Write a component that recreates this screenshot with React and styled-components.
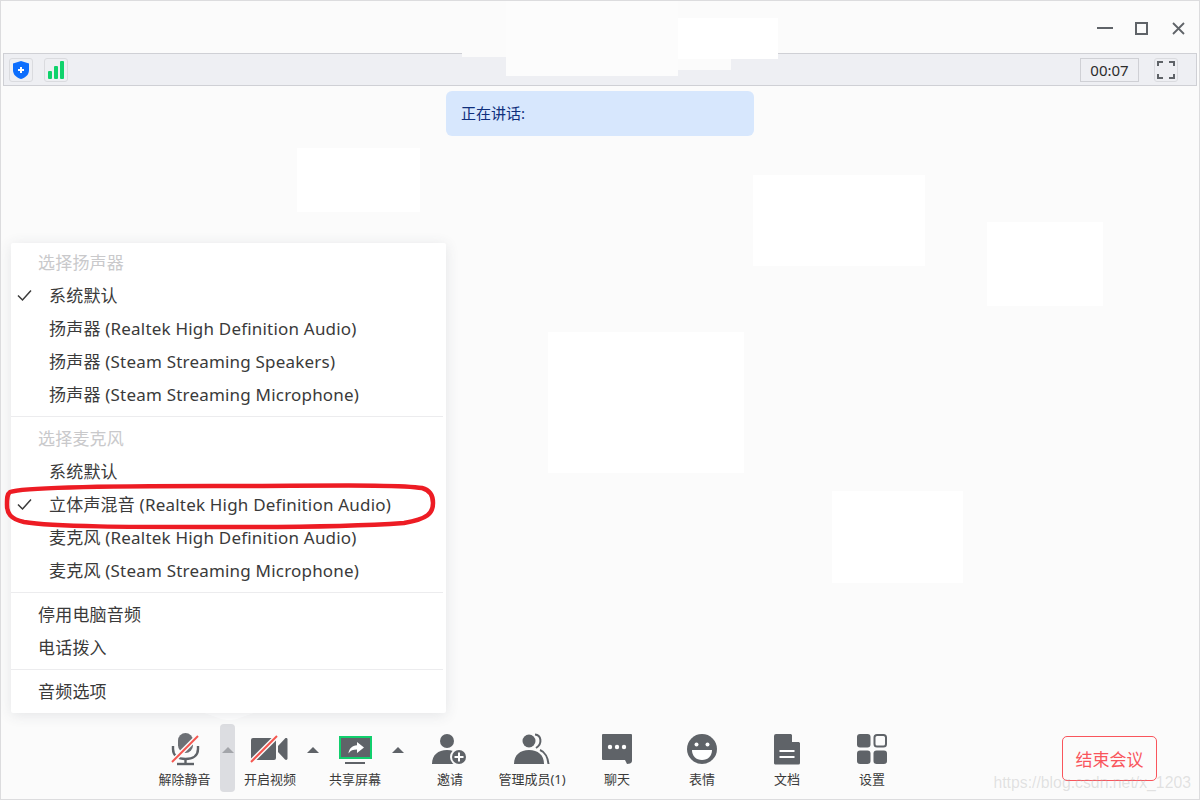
import styled, { createGlobalStyle } from 'styled-components';

const GREY = '#5f6368';
const UI_FONT = '"Noto Sans", "Noto Sans CJK SC", sans-serif';

const GlobalStyle = createGlobalStyle`
  html, body {
    margin: 0;
    padding: 0;
    width: 1200px;
    height: 800px;
    overflow: hidden;
    background: #fff;
  }
  * {
    box-sizing: border-box;
  }
`;

const Window = styled.div`
  position: relative;
  width: 1200px;
  height: 800px;
  display: flex;
  flex-direction: column;
  background: #fbfbfb;
  border: 1px solid #dcdcde;
  font-family: ${UI_FONT};
  color: #3a3a3a;
  overflow: hidden;
`;

const TitleBar = styled.div`
  height: 52px;
  flex: none;
  display: flex;
  justify-content: flex-end;
  align-items: center;
  padding: 2px 2px 0 0;
`;

const WinButton = styled.div`
  width: 37px;
  height: 30px;
  display: flex;
  align-items: center;
  justify-content: center;
`;

const InfoBar = styled.div`
  height: 33px;
  flex: none;
  margin: 0 2px;
  display: flex;
  align-items: center;
  gap: 11px;
  padding: 0 18px 0 5px;
  background: #eeeff3;
  border: 1px solid #cfd0d5;
`;

const InfoIcon = styled.div`
  width: 24px;
  height: 24px;
  display: flex;
  align-items: center;
  justify-content: center;
  border: 1px solid #dadbdf;
  border-radius: 3px;
`;

const Timer = styled.div`
  margin: 0 4px 0 auto;
  width: 59px;
  height: 24px;
  display: flex;
  align-items: center;
  justify-content: center;
  border: 1px solid #cfd0d5;
  font-size: 15px;
  color: #2c2c2c;
`;

const Stage = styled.div`
  flex: 1;
  display: flex;
  justify-content: center;
  align-items: flex-start;
  padding-top: 5px;
`;

const SpeakerPill = styled.div`
  width: 308px;
  height: 45px;
  display: flex;
  align-items: center;
  padding: 0 0 3px 15px;
  background: #d7e7fd;
  border-radius: 6px;
  font-size: 15px;
  color: #0f2f7c;
`;

/* painted-over patches in the screenshot */
const Patch = styled.div`
  position: absolute;
  left: ${(p) => p.$x - 1}px;
  top: ${(p) => p.$y - 1}px;
  width: ${(p) => p.$w}px;
  height: ${(p) => p.$h}px;
  background: ${(p) => p.$bg || '#fff'};
`;

const Menu = styled.div`
  position: absolute;
  left: 10px;
  top: 242px;
  width: 435px;
  height: 470px;
  padding: 4px 3px 0 0;
  background: #fff;
  border-radius: 2px;
  box-shadow: 0 2px 14px rgba(60, 64, 80, 0.12);
  font-size: 17px;
  letter-spacing: 0.2px;
`;

const MenuTip = styled.svg`
  position: absolute;
  left: 203px;
  top: 712px;
`;

const Row = styled.div`
  height: 33px;
  display: flex;
  align-items: center;
  padding: 0 0 4px ${(p) => (p.$flat ? 27 : 6)}px;
  color: ${(p) => (p.$muted ? '#c9c9cb' : '#3a3a3a')};
  white-space: nowrap;
`;

const CheckSlot = styled.span`
  width: 32px;
  flex: none;
  display: flex;
  align-items: center;
  padding-top: 2px;
`;

const Divider = styled.div`
  height: 1px;
  margin: 4px 0 6px;
  background: #ececee;
`;

const Highlight = styled.svg`
  position: absolute;
  left: 3px;
  top: 482px;
  pointer-events: none;
`;

const Toolbar = styled.div`
  height: 75px;
  flex: none;
  display: flex;
  align-items: flex-start;
  padding-left: 148px;
`;

const Tool = styled.div`
  width: ${(p) => p.$w}px;
  flex: none;
  display: flex;
  flex-direction: column;
  align-items: center;
  padding-top: 8px;
  font-size: 13px;
  color: #3a3a3a;
`;

const ToolIcon = styled.svg`
  display: block;
  width: 44px;
  height: 34px;
`;

const ToolLabel = styled.div`
  margin-top: 5px;
  line-height: 16px;
  white-space: nowrap;
`;

const Caret = styled.div`
  width: 15px;
  height: 68px;
  flex: none;
  display: flex;
  justify-content: center;
  padding-top: 23px;
  border-radius: 4px;
  background: ${(p) => (p.$active ? '#dcdde1' : 'transparent')};
  &::before {
    content: '';
    width: 0;
    height: 0;
    border-left: 6px solid transparent;
    border-right: 6px solid transparent;
    border-bottom: 6px solid ${(p) => (p.$active ? '#a3a5aa' : GREY)};
  }
`;

const EndButton = styled.div`
  margin: 12px 42px 0 auto;
  width: 95px;
  height: 45px;
  display: flex;
  align-items: center;
  justify-content: center;
  border: 1px solid #f9555c;
  border-radius: 5px;
  font-size: 17px;
  color: #f9555c;
`;

const Watermark = styled.div`
  position: absolute;
  right: 8px;
  bottom: 7px;
  font-family: "Liberation Sans", sans-serif;
  font-size: 15.8px;
  color: rgba(170, 170, 170, 0.32);
`;

const Check = () => (
  <svg width="15" height="13" viewBox="0 0 15 13">
    <path d="M1 6.500l4.500 4.500 8.500-9.500" fill="none" stroke="#3a3a3a" strokeWidth="1.500" />
  </svg>
);

const Slash = ({ d }) => (
  <>
    <path d={d} stroke="#fbfbfb" strokeWidth="5" fill="none" />
    <path d={d} stroke="#f4564f" strokeWidth="2" fill="none" />
  </>
);

const MicIcon = () => (
  <ToolIcon viewBox="0 0 44 34">
    <rect x="15" y="1" width="15" height="20" rx="7.500" fill="#6d7075" />
    <path d="M10 14v3c0 7 5.500 10 12.500 10S35 24 35 17v-3" fill="none" stroke={GREY} strokeWidth="2.400" />
    <path d="M22.500 27v4" stroke={GREY} strokeWidth="2.400" />
    <path d="M14 32h17" stroke={GREY} strokeWidth="2.400" />
    <Slash d="M9 30L35 4" />
  </ToolIcon>
);

const VideoIcon = () => (
  <ToolIcon viewBox="0 0 44 34">
    <rect x="3" y="6" width="25" height="22" rx="2" fill={GREY} />
    <path d="M30 14l7-7.500c1-.8 2.500-.4 2.500 1v19c0 1.400-1.500 1.800-2.500 1l-7-7.500z" fill={GREY} />
    <Slash d="M3 30L29 4" />
  </ToolIcon>
);

const ShareIcon = () => (
  <ToolIcon viewBox="0 0 44 34">
    <rect x="7" y="5" width="31" height="21" fill={GREY} stroke="#11cf6d" strokeWidth="2" />
    <path d="M24 10l7 5.500-7 5.500v-3.400c-4 0-6.500 1-8.500 3.900.5-5 3.500-8 8.500-8.300z" fill="#fff" />
    <rect x="12" y="30" width="20" height="2" fill={GREY} />
  </ToolIcon>
);

const InviteIcon = () => (
  <ToolIcon viewBox="0 0 44 34">
    <circle cx="19" cy="9" r="7" fill={GREY} />
    <path d="M4 32c0-9 6-14 15-14s15 5 15 14z" fill={GREY} />
    <circle cx="31" cy="25" r="9" fill="#fbfbfb" />
    <circle cx="31" cy="25" r="7" fill={GREY} />
    <path d="M31 20.500v9M26.500 25h9" stroke="#fff" strokeWidth="2" />
  </ToolIcon>
);

const MembersIcon = () => (
  <ToolIcon viewBox="0 0 44 34">
    <path d="M25 2.500c6 .5 8 9 1 13.500" fill="none" stroke={GREY} strokeWidth="2" />
    <path d="M30 18c5 2 8 8 8.500 14" fill="none" stroke={GREY} strokeWidth="2" />
    <circle cx="19" cy="9" r="6.500" fill={GREY} />
    <path d="M4 32c0-9 6-14 15-14s15 5 15 14z" fill={GREY} />
  </ToolIcon>
);

const ChatIcon = () => (
  <ToolIcon viewBox="0 0 44 34">
    <path d="M8 2h28a1 1 0 0 1 1 1v26c0 2-2 3-5 3l-2-4H8a1 1 0 0 1-1-1V3a1 1 0 0 1 1-1z" fill={GREY} />
    <circle cx="15" cy="15" r="2.200" fill="#fff" />
    <circle cx="22" cy="15" r="2.200" fill="#fff" />
    <circle cx="29" cy="15" r="2.200" fill="#fff" />
  </ToolIcon>
);

const EmojiIcon = () => (
  <ToolIcon viewBox="0 0 44 34">
    <circle cx="22" cy="17" r="15" fill={GREY} />
    <circle cx="16.500" cy="12.500" r="2" fill="#fff" />
    <circle cx="27.500" cy="12.500" r="2" fill="#fff" />
    <path d="M12 18h20c0 6-4 10-10 10s-10-4-10-10z" fill="#fff" />
  </ToolIcon>
);

const DocIcon = () => (
  <ToolIcon viewBox="0 0 44 34">
    <path d="M11 2h15l9 9v20a1.500 1.500 0 0 1-1.500 1.500h-22.500A1.500 1.500 0 0 1 9 31V4a2 2 0 0 1 2-2z" fill={GREY} />
    <path d="M27 2l8 8h-8z" fill="#fbfbfb" />
    <path d="M14.500 19h15M14.500 25h15" stroke="#fff" strokeWidth="2" />
  </ToolIcon>
);

const SettingsIcon = () => (
  <ToolIcon viewBox="0 0 44 34">
    <rect x="7" y="2" width="13.500" height="13.500" rx="3" fill={GREY} />
    <rect x="24.500" y="3" width="11.500" height="11.500" rx="2.500" fill="none" stroke={GREY} strokeWidth="2" />
    <rect x="7" y="18.500" width="13.500" height="13.500" rx="3" fill={GREY} />
    <rect x="23.500" y="18.500" width="13.500" height="13.500" rx="3" fill={GREY} />
  </ToolIcon>
);

const speakers = ['扬声器 (Realtek High Definition Audio)', '扬声器 (Steam Streaming Speakers)', '扬声器 (Steam Streaming Microphone)'];
const mics = [
  { text: '系统默认' },
  { text: '立体声混音 (Realtek High Definition Audio)', checked: true },
  { text: '麦克风 (Realtek High Definition Audio)' },
  { text: '麦克风 (Steam Streaming Microphone)' },
];

const MenuItem = ({ text, checked }) => (
  <Row>
    <CheckSlot>{checked && <Check />}</CheckSlot>
    {text}
  </Row>
);

export default function App() {
  return (
    <>
      <GlobalStyle />
      <Window>
        <TitleBar>
          <WinButton>
            <svg width="16" height="2"><rect width="16" height="2" fill={GREY} /></svg>
          </WinButton>
          <WinButton>
            <svg width="13" height="13"><rect x="1" y="1" width="11" height="11" fill="none" stroke={GREY} strokeWidth="2" /></svg>
          </WinButton>
          <WinButton>
            <svg width="13" height="13"><path d="M1 1l11 11M12 1L1 12" stroke={GREY} strokeWidth="1.800" /></svg>
          </WinButton>
        </TitleBar>
        <InfoBar>
          <InfoIcon>
            <svg width="16" height="18" viewBox="0 0 16 18">
              <path d="M8 0l8 2.500V9c0 5-3.500 7.500-8 9-4.500-1.500-8-4-8-9V2.500z" fill="#0d6efd" />
              <path d="M8 6v6M5 9h6" stroke="#fff" strokeWidth="2" />
            </svg>
          </InfoIcon>
          <InfoIcon>
            <svg width="16" height="18" viewBox="0 0 16 18">
              <rect x="0" y="10" width="4" height="8" rx="1" fill="#0fd26b" />
              <rect x="6" y="5" width="4" height="13" rx="1" fill="#0fd26b" />
              <rect x="12" y="0" width="4" height="18" rx="1" fill="#0fd26b" />
            </svg>
          </InfoIcon>
          <Timer>00:07</Timer>
          <InfoIcon>
            <svg width="18" height="18" viewBox="0 0 18 18">
              <path d="M1 5V1h5M12 1h5v4M17 13v4h-5M6 17H1v-4" fill="none" stroke={GREY} strokeWidth="2" />
            </svg>
          </InfoIcon>
        </InfoBar>
        <Stage>
          <SpeakerPill>正在讲话:</SpeakerPill>
        </Stage>
        <Toolbar>
          <Tool $w={71}><MicIcon /><ToolLabel>解除静音</ToolLabel></Tool>
          <Caret $active />
          <Tool $w={70}><VideoIcon /><ToolLabel>开启视频</ToolLabel></Tool>
          <Caret />
          <Tool $w={70}><ShareIcon /><ToolLabel>共享屏幕</ToolLabel></Tool>
          <Caret />
          <Tool $w={90}><InviteIcon /><ToolLabel>邀请</ToolLabel></Tool>
          <Tool $w={74}><MembersIcon /><ToolLabel>管理成员(1)</ToolLabel></Tool>
          <Tool $w={96}><ChatIcon /><ToolLabel>聊天</ToolLabel></Tool>
          <Tool $w={74}><EmojiIcon /><ToolLabel>表情</ToolLabel></Tool>
          <Tool $w={96}><DocIcon /><ToolLabel>文档</ToolLabel></Tool>
          <Tool $w={74}><SettingsIcon /><ToolLabel>设置</ToolLabel></Tool>
          <EndButton>结束会议</EndButton>
        </Toolbar>

        <Patch $x={462} $y={0} $w={44} $h={57} $bg="#fbfbfb" />
        <Patch $x={506} $y={0} $w={172} $h={76} $bg="#fcfcfc" />
        <Patch $x={678} $y={0} $w={53} $h={70} $bg="#fbfbfb" />
        <Patch $x={678} $y={18} $w={100} $h={41} />
        <Patch $x={297} $y={148} $w={123} $h={64} />
        <Patch $x={753} $y={175} $w={172} $h={91} />
        <Patch $x={987} $y={222} $w={116} $h={84} />
        <Patch $x={548} $y={332} $w={196} $h={141} />
        <Patch $x={832} $y={491} $w={131} $h={92} />

        <MenuTip width="50" height="10" viewBox="0 0 50 10">
          <path d="M0 0h50c-8 2-16 7-25 7S8 2 0 0z" fill="#fff" />
        </MenuTip>
        <Menu>
          <Row $flat $muted>选择扬声器</Row>
          <MenuItem text="系统默认" checked />
          {speakers.map((s) => <MenuItem key={s} text={s} />)}
          <Divider />
          <Row $flat $muted>选择麦克风</Row>
          {mics.map((m) => <MenuItem key={m.text} {...m} />)}
          <Divider />
          <Row $flat>停用电脑音频</Row>
          <Row $flat>电话拨入</Row>
          <Divider />
          <Row $flat>音频选项</Row>
        </Menu>
        <Highlight width="436" height="48" viewBox="0 0 436 48">
          <path
            d="M6 9C20 4 110 3 210 3S396 1 418 5C426 7 429 12 429 20C429 30 424 36 400 40C330 45 260 44 200 44C130 44 50 44 20 39C6 36 3 30 3 22C3 15 3 11 6 9Z"
            fill="none"
            stroke="#ed1c24"
            strokeWidth="4.500"
          />
        </Highlight>
        <Watermark>https://blog.csdn.net/x_1203</Watermark>
      </Window>
    </>
  );
}
